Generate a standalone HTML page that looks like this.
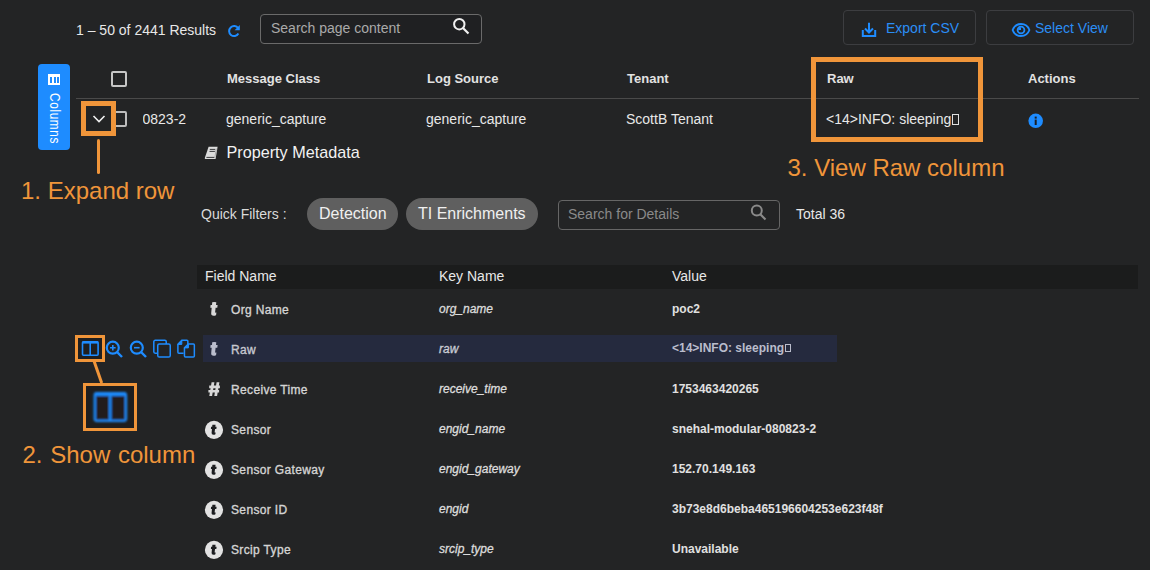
<!DOCTYPE html>
<html><head><meta charset="utf-8">
<style>
html,body{margin:0;padding:0;}
body{width:1150px;height:570px;overflow:hidden;background:#232425;position:relative;font-family:"Liberation Sans",sans-serif;color:#e6e6e6;}
.a{position:absolute;white-space:nowrap;line-height:1;}
.box{position:absolute;box-sizing:border-box;}
svg{position:absolute;overflow:visible;}
.or{border-color:#f0953a;border-style:solid;}
.hd{font-weight:bold;font-size:13px;color:#e2e2e2;margin-top:-1px;}
.rd{font-size:14px;color:#e8e8e8;}
.fn{font-size:12px;color:#d4d4d4;letter-spacing:0.35px;-webkit-text-stroke:0.35px #d4d4d4;}
.kn{font-style:italic;font-size:12px;color:#dcdcdc;-webkit-text-stroke:0.3px #dcdcdc;margin-top:-1px;}
.vl{font-weight:bold;font-size:12px;color:#e0e0e0;margin-top:-1px;}
.ann{font-size:24px;color:#f0953a;}
</style></head>
<body>
<!-- top bar -->
<div class="a" style="left:76px;top:23px;font-size:14px;color:#e8e8e8;">1 – 50 of 2441 Results</div>
<svg style="left:227px;top:24px" width="14" height="14" viewBox="0 0 14 14">
 <path d="M11.2 4.2 A5 5 0 1 0 11.4 9.6" fill="none" stroke="#1e8cff" stroke-width="2"/>
 <path d="M12.8 1 L12.8 6.2 L7.6 6.2 Z" fill="#1e8cff"/>
</svg>
<div class="box" style="left:260px;top:14px;width:222px;height:30px;border:1px solid #6a6a6a;border-radius:4px;background:#1f2022;"></div>
<div class="a" style="left:271px;top:21px;font-size:14px;color:#aaaaaa;">Search page content</div>
<svg style="left:452px;top:17px" width="20" height="20" viewBox="0 0 20 20">
 <circle cx="7.3" cy="7.2" r="5.2" fill="none" stroke="#f0f0f0" stroke-width="2"/>
 <path d="M11 11 L16.5 16.5" stroke="#f0f0f0" stroke-width="2.2" stroke-linecap="butt"/>
</svg>

<div class="box" style="left:843px;top:10px;width:133px;height:35px;border:1px solid #3c3d40;border-radius:4px;"></div>
<svg style="left:860px;top:22px" width="18" height="16" viewBox="0 0 18 16">
 <path d="M9 0.8 V10" stroke="#1e8cff" stroke-width="2" fill="none"/>
 <path d="M5 6.5 L9 10.5 L13 6.5" stroke="#1e8cff" stroke-width="2" fill="none"/>
 <path d="M2.8 8 V14 H15.2 V8" stroke="#1e8cff" stroke-width="2" fill="none"/>
</svg>
<div class="a" style="left:886px;top:21px;font-size:14px;color:#2b8ef5;">Export CSV</div>

<div class="box" style="left:986px;top:10px;width:148px;height:35px;border:1px solid #3c3d40;border-radius:4px;"></div>
<svg style="left:1011px;top:22px" width="20" height="16" viewBox="0 0 20 16">
 <path d="M1.6 8 C4.5 0, 15.5 0, 18.4 8 C15.5 16, 4.5 16, 1.6 8 Z" fill="none" stroke="#1e8cff" stroke-width="1.8"/>
 <circle cx="10" cy="8" r="3.4" fill="none" stroke="#1e8cff" stroke-width="1.8"/>
 <path d="M10 8 V5.2 A2.8 2.8 0 0 0 7.2 8 Z" fill="#1e8cff"/>
</svg>
<div class="a" style="left:1035px;top:21px;font-size:14px;color:#2b8ef5;">Select View</div>

<!-- Columns tab -->
<div class="box" style="left:38px;top:64px;width:32px;height:86px;background:#1e8cff;border-radius:4px;"></div>
<div class="box" style="left:48px;top:74px;width:12px;height:11px;background:#fff;"></div>
<div class="box" style="left:50px;top:77px;width:2px;height:6px;background:#1e8cff;"></div>
<div class="box" style="left:53.5px;top:77px;width:2px;height:6px;background:#1e8cff;"></div>
<div class="box" style="left:57px;top:77px;width:1.5px;height:6px;background:#1e8cff;"></div>
<div class="a" style="left:62.2px;top:92.8px;font-size:14px;color:#fff;letter-spacing:0.7px;transform-origin:0 0;transform:rotate(90deg) scaleX(0.85);">Columns</div>

<!-- table header -->
<div class="box" style="left:111px;top:71px;width:16px;height:16px;border:2px solid #c6c6c6;border-radius:2px;"></div>
<div class="a hd" style="left:227px;top:73px;">Message Class</div>
<div class="a hd" style="left:427px;top:73px;">Log Source</div>
<div class="a hd" style="left:627px;top:73px;">Tenant</div>
<div class="a hd" style="left:827px;top:73px;">Raw</div>
<div class="a hd" style="left:1028px;top:73px;">Actions</div>
<div class="box" style="left:76px;top:98px;width:1063px;height:1px;background:#4a4a4a;"></div>

<!-- row -->
<div class="box" style="left:111px;top:111px;width:16px;height:16px;border:2px solid #bdbdbd;border-radius:2px;"></div>
<div class="box or" style="left:81px;top:101px;width:35px;height:35px;border-width:5px;background:#232425;"></div>
<svg style="left:92px;top:114px" width="14" height="10" viewBox="0 0 14 10">
 <path d="M1.5 2 L7 7.5 L12.5 2" fill="none" stroke="#f0f0f0" stroke-width="1.6"/>
</svg>
<div style="position:absolute;left:143px;top:108px;width:50px;height:22px;overflow:hidden;">
 <div class="a rd" style="left:-0.5px;top:4px;">0823-2</div>
</div>
<div class="a rd" style="left:226px;top:112px;">generic_capture</div>
<div class="a rd" style="left:426px;top:112px;">generic_capture</div>
<div class="a rd" style="left:626px;top:112px;">ScottB Tenant</div>
<div class="a rd" style="left:826px;top:112px;">&lt;14&gt;INFO: sleeping<span style="display:inline-block;width:7px;height:11px;border:1px solid #e0e0e0;box-sizing:border-box;margin-left:1px;vertical-align:-1px;"></span></div>
<svg style="left:1028px;top:113px" width="16" height="16" viewBox="0 0 16 16">
 <circle cx="7.7" cy="7.8" r="7.3" fill="#1e8cff"/>
 <rect x="6.7" y="6.6" width="2" height="5.4" fill="#1b1d22"/>
 <rect x="6.7" y="3.6" width="2" height="2" fill="#1b1d22"/>
</svg>
<div class="box or" style="left:811px;top:57px;width:172px;height:85px;border-width:5px;"></div>

<!-- property metadata -->
<svg style="left:204px;top:146px" width="16" height="14" viewBox="0 0 16 14">
 <path d="M4.6 0.8 H13.6 L11.6 13 H1.4 Q0.6 13 0.8 12 Z" fill="#dcdcdc"/>
 <path d="M5.8 3.4 H11.2 M5.5 5.4 H10.9 M2.4 11.4 H10.3" stroke="#26272a" stroke-width="0.9"/>
 <path d="M12.3 2.6 L10.8 12" stroke="#8a8a8a" stroke-width="0.6"/>
</svg>
<div class="a" style="left:226.5px;top:143.5px;font-size:16.2px;color:#f2f2f2;">Property Metadata</div>
<div class="a ann" style="left:787.5px;top:156px;">3. View Raw column</div>
<div class="box" style="left:97px;top:139px;width:3px;height:35px;background:#f0953a;border-radius:1.5px;"></div>
<div class="a ann" style="left:21px;top:179px;">1. Expand row</div>

<!-- quick filters -->
<div class="a" style="left:201px;top:207px;font-size:14px;color:#dadada;">Quick Filters :</div>
<div class="box" style="left:307px;top:198px;width:91px;height:32px;border-radius:16px;background:#5f5f5f;"></div>
<div class="a" style="left:319px;top:206px;font-size:16px;color:#f0f0f0;">Detection</div>
<div class="box" style="left:406px;top:198px;width:132px;height:32px;border-radius:16px;background:#5f5f5f;"></div>
<div class="a" style="left:418px;top:206px;font-size:16px;color:#f0f0f0;">TI Enrichments</div>
<div class="box" style="left:558px;top:200px;width:222px;height:30px;border:1px solid #666;border-radius:4px;"></div>
<div class="a" style="left:568px;top:207px;font-size:14px;color:#8a8a8a;">Search for Details</div>
<svg style="left:750px;top:204px" width="20" height="20" viewBox="0 0 20 20">
 <circle cx="6.8" cy="6.6" r="5" fill="none" stroke="#8a8a8a" stroke-width="2"/>
 <path d="M10.3 10.3 L15.5 15.5" stroke="#8a8a8a" stroke-width="2.2"/>
</svg>
<div class="a" style="left:796px;top:207px;font-size:14px;color:#e8e8e8;">Total 36</div>

<!-- detail table -->
<div class="box" style="left:197px;top:265px;width:941px;height:24px;background:#1b1c1c;"></div>
<div class="a" style="left:205px;top:269px;font-size:14px;color:#e8e8e8;">Field Name</div>
<div class="a" style="left:439px;top:269px;font-size:14px;color:#e8e8e8;">Key Name</div>
<div class="a" style="left:672px;top:269px;font-size:14px;color:#e8e8e8;">Value</div>

<div class="box" style="left:203px;top:335px;width:634px;height:27px;background:#252a3e;"></div>

<!-- rows -->
<svg style="left:205px;top:299px" width="18" height="20" viewBox="0 0 18 20"><path d="M7.2 3.3 Q9.2 2.9 11.3 3.3 L11.0 6 L12.6 6 L12.3 8.8 L10.6 8.8 L10.1 13.2 Q10.1 13.8 10.9 13.6 L11.4 13.5 L11.1 15.9 Q10.2 16.8 8.6 16.8 Q5.9 16.8 6.2 14 L6.7 8.8 L5.3 8.8 L5.6 6 L7.0 6 Z" fill="#d8d8d8"/></svg>
<div class="a fn" style="left:231px;top:304px;">Org Name</div>
<div class="a kn" style="left:439px;top:304px;">org_name</div>
<div class="a vl" style="left:672px;top:304px;">poc2</div>

<svg style="left:205px;top:339px" width="18" height="20" viewBox="0 0 18 20"><path d="M7.2 3.3 Q9.2 2.9 11.3 3.3 L11.0 6 L12.6 6 L12.3 8.8 L10.6 8.8 L10.1 13.2 Q10.1 13.8 10.9 13.6 L11.4 13.5 L11.1 15.9 Q10.2 16.8 8.6 16.8 Q5.9 16.8 6.2 14 L6.7 8.8 L5.3 8.8 L5.6 6 L7.0 6 Z" fill="#babdcc"/></svg>
<div class="a fn" style="left:231px;top:344px;color:#babdcc;">Raw</div>
<div class="a kn" style="left:439px;top:344px;color:#babdcc;">raw</div>
<div class="a vl" style="left:672px;top:343px;color:#babdcc;">&lt;14&gt;INFO: sleeping<span style="display:inline-block;width:5.5px;height:8px;border:1px solid #babdcc;box-sizing:border-box;margin-left:1px;vertical-align:0px;"></span></div>

<svg style="left:204px;top:378px" width="20" height="22" viewBox="0 0 20 22"><path d="M7.6 4.2 H10.4 L8.1 18 H5.3 Z M12.6 4.2 H15.4 L13.1 18 H10.3 Z M5.2 7.6 H15.9 V10.2 H5.2 Z M4.4 12 H15.1 V14.6 H4.4 Z" fill="#d8d8d8"/></svg>
<div class="a fn" style="left:231px;top:384px;">Receive Time</div>
<div class="a kn" style="left:439px;top:384px;">receive_time</div>
<div class="a vl" style="left:672px;top:384px;">1753463420265</div>

<svg style="left:203px;top:419px" width="22" height="22" viewBox="0 0 22 22"><circle cx="11" cy="10.9" r="9.1" fill="#e2e2e2"/><g transform="translate(3.75,3.4) scale(0.78,0.74)"><path d="M7.2 3.3 Q9.2 2.9 11.3 3.3 L11.0 6 L12.6 6 L12.3 8.8 L10.6 8.8 L10.1 13.2 Q10.1 13.8 10.9 13.6 L11.4 13.5 L11.1 15.9 Q10.2 16.8 8.6 16.8 Q5.9 16.8 6.2 14 L6.7 8.8 L5.3 8.8 L5.6 6 L7.0 6 Z" fill="#1c1d20"/></g></svg>
<div class="a fn" style="left:231px;top:424px;">Sensor</div>
<div class="a kn" style="left:439px;top:424px;">engid_name</div>
<div class="a vl" style="left:672px;top:424px;">snehal-modular-080823-2</div>

<svg style="left:203px;top:459px" width="22" height="22" viewBox="0 0 22 22"><circle cx="11" cy="10.9" r="9.1" fill="#e2e2e2"/><g transform="translate(3.75,3.4) scale(0.78,0.74)"><path d="M7.2 3.3 Q9.2 2.9 11.3 3.3 L11.0 6 L12.6 6 L12.3 8.8 L10.6 8.8 L10.1 13.2 Q10.1 13.8 10.9 13.6 L11.4 13.5 L11.1 15.9 Q10.2 16.8 8.6 16.8 Q5.9 16.8 6.2 14 L6.7 8.8 L5.3 8.8 L5.6 6 L7.0 6 Z" fill="#1c1d20"/></g></svg>
<div class="a fn" style="left:231px;top:464px;">Sensor Gateway</div>
<div class="a kn" style="left:439px;top:464px;">engid_gateway</div>
<div class="a vl" style="left:672px;top:464px;">152.70.149.163</div>

<svg style="left:203px;top:499px" width="22" height="22" viewBox="0 0 22 22"><circle cx="11" cy="10.9" r="9.1" fill="#e2e2e2"/><g transform="translate(3.75,3.4) scale(0.78,0.74)"><path d="M7.2 3.3 Q9.2 2.9 11.3 3.3 L11.0 6 L12.6 6 L12.3 8.8 L10.6 8.8 L10.1 13.2 Q10.1 13.8 10.9 13.6 L11.4 13.5 L11.1 15.9 Q10.2 16.8 8.6 16.8 Q5.9 16.8 6.2 14 L6.7 8.8 L5.3 8.8 L5.6 6 L7.0 6 Z" fill="#1c1d20"/></g></svg>
<div class="a fn" style="left:231px;top:504px;">Sensor ID</div>
<div class="a kn" style="left:439px;top:504px;">engid</div>
<div class="a vl" style="left:672px;top:504px;">3b73e8d6beba465196604253e623f48f</div>

<svg style="left:203px;top:539px" width="22" height="22" viewBox="0 0 22 22"><circle cx="11" cy="10.9" r="9.1" fill="#e2e2e2"/><g transform="translate(3.75,3.4) scale(0.78,0.74)"><path d="M7.2 3.3 Q9.2 2.9 11.3 3.3 L11.0 6 L12.6 6 L12.3 8.8 L10.6 8.8 L10.1 13.2 Q10.1 13.8 10.9 13.6 L11.4 13.5 L11.1 15.9 Q10.2 16.8 8.6 16.8 Q5.9 16.8 6.2 14 L6.7 8.8 L5.3 8.8 L5.6 6 L7.0 6 Z" fill="#1c1d20"/></g></svg>
<div class="a fn" style="left:231px;top:544px;">Srcip Type</div>
<div class="a kn" style="left:439px;top:544px;">srcip_type</div>
<div class="a vl" style="left:672px;top:544px;">Unavailable</div>

<!-- toolbar icons -->
<div class="box or" style="left:75px;top:335px;width:30px;height:27px;border-width:3px;background:#1f1f20;"></div>
<svg style="left:81px;top:340px" width="19" height="17" viewBox="0 0 19 17">
 <rect x="1.5" y="1.8" width="15.6" height="13.4" rx="1" fill="none" stroke="#1e8cff" stroke-width="1.6"/>
 <path d="M1.5 2.4 H17.1" stroke="#1e8cff" stroke-width="2.4"/>
 <path d="M9.2 2 V15" stroke="#1e8cff" stroke-width="1.6"/>
</svg>
<svg style="left:105px;top:340px" width="19" height="19" viewBox="0 0 19 19">
 <circle cx="7.8" cy="7.7" r="6" fill="none" stroke="#1e8cff" stroke-width="2.2"/>
 <path d="M12 12 L17 17" stroke="#1e8cff" stroke-width="2.4"/>
 <path d="M5 7.7 H10.6 M7.8 4.9 V10.5" stroke="#1e8cff" stroke-width="1.6"/>
</svg>
<svg style="left:129px;top:340px" width="19" height="19" viewBox="0 0 19 19">
 <circle cx="7.8" cy="7.7" r="6" fill="none" stroke="#1e8cff" stroke-width="2.2"/>
 <path d="M12 12 L17 17" stroke="#1e8cff" stroke-width="2.4"/>
 <path d="M5 7.7 H10.6" stroke="#1e8cff" stroke-width="1.6"/>
</svg>
<svg style="left:152px;top:339px" width="20" height="20" viewBox="0 0 20 20">
 <path d="M5.2 14.25 H3.2 a1.4 1.4 0 0 1 -1.4 -1.4 V2.75 a1.4 1.4 0 0 1 1.4 -1.4 H12.85 a1.4 1.4 0 0 1 1.4 1.4 V4.9" fill="none" stroke="#1e8cff" stroke-width="1.5"/>
 <rect x="5.75" y="4.95" width="12.5" height="13.1" rx="1.6" fill="none" stroke="#1e8cff" stroke-width="1.5"/>
</svg>
<svg style="left:176px;top:339px" width="20" height="20" viewBox="0 0 20 20">
 <path d="M7.6 14.25 H2.9 a1 1 0 0 1 -1 -1 V5.2 L5.8 1.35 H10.85 a1 1 0 0 1 1 1 V4.9" fill="none" stroke="#1e8cff" stroke-width="1.5"/>
 <path d="M1.9 5.4 H5.8 V1.35 Z" fill="#1e8cff" stroke="#1e8cff" stroke-width="1"/>
 <path d="M8.45 8.9 L12.4 4.95 H17.35 a1 1 0 0 1 1 1 V17.05 a1 1 0 0 1 -1 1 H9.45 a1 1 0 0 1 -1 -1 Z" fill="none" stroke="#1e8cff" stroke-width="1.5"/>
 <path d="M8.45 8.9 H12.4 V4.95 Z" fill="#1e8cff" stroke="#1e8cff" stroke-width="1"/>
</svg>
<svg style="left:0;top:0" width="1150" height="570">
 <path d="M94 361 L101.7 383" stroke="#f0953a" stroke-width="3"/>
</svg>
<div class="box or" style="left:83px;top:383px;width:54px;height:48px;border-width:3px;background:#1f1e1e;"></div>
<svg style="left:89px;top:388px" width="42" height="38" viewBox="0 0 42 38">
 <defs><filter id="bl" x="-20%" y="-20%" width="140%" height="140%"><feGaussianBlur stdDeviation="0.8"/></filter></defs>
 <g filter="url(#bl)">
 <rect x="5.75" y="5.2" width="31.2" height="27.6" rx="2" fill="#221e1c" stroke="#1e8cff" stroke-width="2.3"/>
 <path d="M5.75 6.2 H36.95" stroke="#1e8cff" stroke-width="3.4"/>
 <path d="M21.2 5 V32.6" stroke="#1e8cff" stroke-width="2.5"/>
 </g>
</svg>
<div class="a ann" style="left:22.5px;top:443px;word-spacing:1px;">2. Show column</div>
</body></html>
